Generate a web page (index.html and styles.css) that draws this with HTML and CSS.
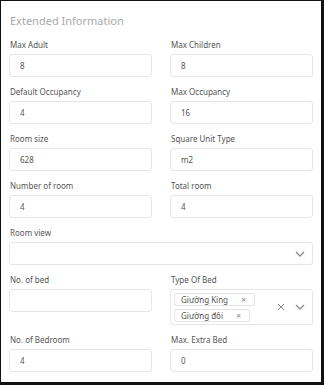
FILE: index.html
```html
<!DOCTYPE html>
<html lang="en">
<head>
    <meta charset="UTF-8">
    <meta name="viewport" content="width=device-width, initial-scale=1.0">
    <title>Extended Information</title>
    <link rel="stylesheet" href="styles.css">
</head>
<body>

<div class="panel">
    <h2 class="panel-title">Extended Information</h2>

    <div class="form-grid">
        <div class="field">
            <label>Max Adult</label>
            <div class="input">8</div>
        </div>
        <div class="field">
            <label>Max Children</label>
            <div class="input">8</div>
        </div>

        <div class="field">
            <label>Default Occupancy</label>
            <div class="input">4</div>
        </div>
        <div class="field">
            <label>Max Occupancy</label>
            <div class="input">16</div>
        </div>

        <div class="field">
            <label>Room size</label>
            <div class="input">628</div>
        </div>
        <div class="field">
            <label>Square Unit Type</label>
            <div class="input">m2</div>
        </div>

        <div class="field">
            <label>Number of room</label>
            <div class="input">4</div>
        </div>
        <div class="field">
            <label>Total room</label>
            <div class="input">4</div>
        </div>

        <div class="field wide">
            <label>Room view</label>
            <div class="input select">
                <span class="select-value"></span>
                <svg class="chevron" width="10" height="6" viewBox="0 0 10 6"><path d="M1 1l4 4 4-4" fill="none" stroke="#8a8a8a" stroke-width="1.3"/></svg>
            </div>
        </div>

        <div class="field">
            <label>No. of bed</label>
            <div class="input"></div>
        </div>
        <div class="field">
            <label>Type Of Bed</label>
            <div class="input multi">
                <div class="chips">
                    <span class="chip">Giường King <span class="chip-x">&times;</span></span>
                    <span class="chip">Giường đôi <span class="chip-x">&times;</span></span>
                </div>
                <div class="multi-actions">
                    <svg class="clear" width="8" height="8" viewBox="0 0 8 8"><path d="M1 1l6 6M7 1l-6 6" fill="none" stroke="#8a8a8a" stroke-width="1"/></svg>
                    <svg class="chevron" width="10" height="6" viewBox="0 0 10 6"><path d="M1 1l4 4 4-4" fill="none" stroke="#8a8a8a" stroke-width="1.3"/></svg>
                </div>
            </div>
        </div>

        <div class="field">
            <label>No. of Bedroom</label>
            <div class="input">4</div>
        </div>
        <div class="field">
            <label>Max. Extra Bed</label>
            <div class="input">0</div>
        </div>
    </div>
</div>

</body>
</html>
```

FILE: styles.css
```css
body {
    margin: 0;
    background-color: #ffffff;
    font-family: 'Noto Sans', 'Open Sans', sans-serif;
    color: #444;
}
.panel {
    width: 324px;
    height: 385px;
    box-sizing: border-box;
    border-style: solid;
    border-color: #111;
    border-width: 1px 3px 3px 1px;
    padding: 11px 8px 0 8px;
}
.panel-title {
    margin: 0 0 9px 1px;
    font-size: 11px;
    line-height: 18px;
    font-weight: 400;
    color: #a9a9a9;
}
.form-grid {
    display: grid;
    grid-template-columns: 1fr 1fr;
    column-gap: 18px;
    row-gap: 9px;
}
.field {
    display: flex;
    flex-direction: column;
}
.field.wide {
    grid-column: 1 / 3;
}
.field label {
    font-size: 8px;
    line-height: 12px;
    color: #555;
    margin: 0 0 3px 1px;
}
.input {
    height: 23px;
    box-sizing: border-box;
    border: 1px solid #e6e6e6;
    border-radius: 3px;
    padding: 0 10px;
    font-size: 8px;
    line-height: 21px;
    color: #555;
}
.select {
    display: flex;
    align-items: center;
    justify-content: space-between;
    padding-right: 7px;
}
.multi {
    height: 36px;
    display: flex;
    align-items: center;
    justify-content: space-between;
    padding: 0 7px 0 3px;
}
.chips {
    display: flex;
    flex-direction: column;
    align-items: flex-start;
    gap: 3px;
}
.chip {
    display: flex;
    align-items: center;
    height: 13px;
    box-sizing: border-box;
    border: 1px solid #e3e3e3;
    border-radius: 2px;
    padding: 0 8px 0 6px;
    font-size: 8px;
    line-height: 11px;
    color: #555;
}
.chip-x {
    margin-left: 13px;
    font-size: 9px;
    color: #888;
}
.multi-actions {
    display: flex;
    align-items: center;
    gap: 10px;
}
```
